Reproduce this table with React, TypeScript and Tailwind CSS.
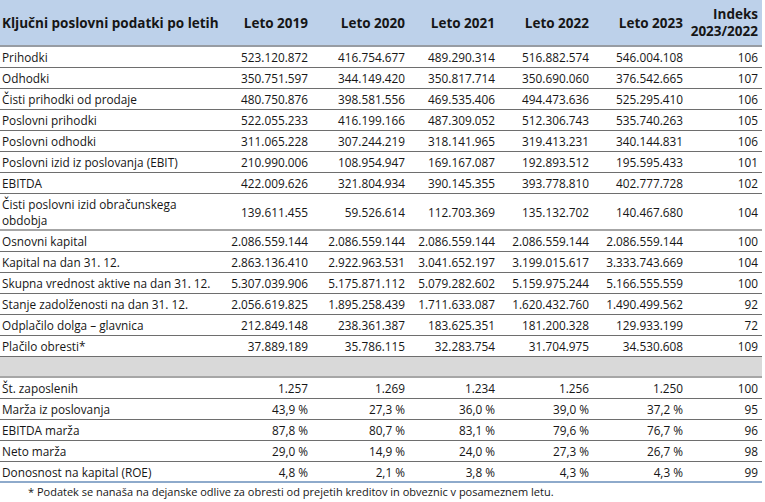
const years = ['Leto 2019', 'Leto 2020', 'Leto 2021', 'Leto 2022', 'Leto 2023']

type Row = { label: React.ReactNode; values: string[]; idx: string; h?: string; line?: string }

const top: Row[] = [
  { label: 'Prihodki', values: ['523.120.872', '416.754.677', '489.290.314', '516.882.574', '546.004.108'], idx: '106' },
  { label: 'Odhodki', values: ['350.751.597', '344.149.420', '350.817.714', '350.690.060', '376.542.665'], idx: '107' },
  { label: 'Čisti prihodki od prodaje', values: ['480.750.876', '398.581.556', '469.535.406', '494.473.636', '525.295.410'], idx: '106' },
  { label: 'Poslovni prihodki', values: ['522.055.233', '416.199.166', '487.309.052', '512.306.743', '535.740.263'], idx: '105' },
  { label: 'Poslovni odhodki', values: ['311.065.228', '307.244.219', '318.141.965', '319.413.231', '340.144.831'], idx: '106' },
  { label: 'Poslovni izid iz poslovanja (EBIT)', values: ['210.990.006', '108.954.947', '169.167.087', '192.893.512', '195.595.433'], idx: '101' },
  { label: 'EBITDA', values: ['422.009.626', '321.804.934', '390.145.355', '393.778.810', '402.777.728'], idx: '102' },
  {
    label: (<>Čisti poslovni izid obračunskega<br />obdobja</>),
    values: ['139.611.455', '59.526.614', '112.703.369', '135.132.702', '140.467.680'],
    idx: '104',
    h: 'h-[37px]',
    line: 'border-b-2 border-[#a6a6a6]',
  },
  { label: 'Osnovni kapital', values: ['2.086.559.144', '2.086.559.144', '2.086.559.144', '2.086.559.144', '2.086.559.144'], idx: '100' },
  { label: 'Kapital na dan 31. 12.', values: ['2.863.136.410', '2.922.963.531', '3.041.652.197', '3.199.015.617', '3.333.743.669'], idx: '104' },
  { label: 'Skupna vrednost aktive na dan 31. 12.', values: ['5.307.039.906', '5.175.871.112', '5.079.282.602', '5.159.975.244', '5.166.555.559'], idx: '100' },
  { label: 'Stanje zadolženosti na dan 31. 12.', values: ['2.056.619.825', '1.895.258.439', '1.711.633.087', '1.620.432.760', '1.490.499.562'], idx: '92' },
  { label: 'Odplačilo dolga – glavnica', values: ['212.849.148', '238.361.387', '183.625.351', '181.200.328', '129.933.199'], idx: '72' },
  { label: 'Plačilo obresti*', values: ['37.889.189', '35.786.115', '32.283.754', '31.704.975', '34.530.608'], idx: '109' },
]

const bottom: Row[] = [
  { label: 'Št. zaposlenih', values: ['1.257', '1.269', '1.234', '1.256', '1.250'], idx: '100' },
  { label: 'Marža iz poslovanja', values: ['43,9 %', '27,3 %', '36,0 %', '39,0 %', '37,2 %'], idx: '95' },
  { label: 'EBITDA marža', values: ['87,8 %', '80,7 %', '83,1 %', '79,6 %', '76,7 %'], idx: '96' },
  { label: 'Neto marža', values: ['29,0 %', '14,9 %', '24,0 %', '27,3 %', '26,7 %'], idx: '98' },
  { label: 'Donosnost na kapital (ROE)', values: ['4,8 %', '2,1 %', '3,8 %', '4,3 %', '4,3 %'], idx: '99', line: 'border-b-2 border-[#8eaacb]' },
]

const colW = ['w-[100px]', 'w-[97px]', 'w-[90px]', 'w-[94px]', 'w-[94px]']

function DataRow({ row }: { row: Row }) {
  return (
    <div className={`flex items-center ${row.h ?? 'h-[21px]'} ${row.line ?? 'border-b border-[#6e6e6e]'}`}>
      <div className="w-[212px] pl-[2px] leading-[16px] whitespace-nowrap">{row.label}</div>
      {row.values.map((v, i) => (
        <div key={i} className={`${colW[i]} pr-[4px] text-right whitespace-nowrap`}>
          {v}
        </div>
      ))}
      <div className="w-[75px] pr-[4px] text-right">{row.idx}</div>
    </div>
  )
}

export default function App() {
  return (
    <div className="w-[765px] h-[502px] overflow-hidden bg-white text-[#161616] text-[11.8px] leading-[18px] font-['Open_Sans',sans-serif]">
      <div className="w-[762px]">
        {/* Header */}
        <div className="flex items-center h-[47px] bg-[#bdd1ea] border-b-2 border-[#979ca3] font-bold text-[13.5px] [font-stretch:92%]">
          <div className="w-[212px] pl-[2px] whitespace-nowrap">Ključni poslovni podatki po letih</div>
          {years.map((y, i) => (
            <div key={y} className={`${colW[i]} pr-[4px] text-right`}>
              {y}
            </div>
          ))}
          <div className="w-[75px] pr-[4px] text-right leading-[17px]">
            Indeks
            <br />
            2023/2022
          </div>
        </div>

        {top.map((r, i) => (
          <DataRow key={i} row={r} />
        ))}

        {/* empty divider */}
        <div className="h-[21px] bg-[#d9d9d9] border-b-2 border-[#a6a6a6]" />

        {bottom.map((r, i) => (
          <DataRow key={i} row={r} />
        ))}
      </div>

      <div className="pl-[28px] pt-[2px] text-[11px] leading-[14px]">
        * Podatek se nanaša na dejanske odlive za obresti od prejetih kreditov in obveznic v posameznem letu.
      </div>
    </div>
  )
}
